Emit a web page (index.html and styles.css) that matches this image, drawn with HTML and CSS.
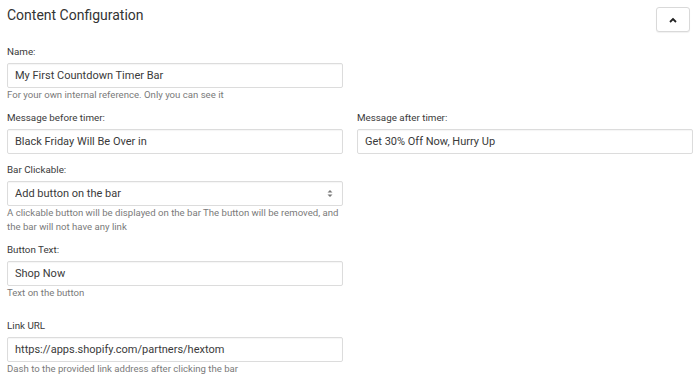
FILE: index.html
```html
<!DOCTYPE html>
<html lang="en">
<head>
    <meta charset="UTF-8">
    <meta name="viewport" content="width=device-width, initial-scale=1.0">
    <title>Content Configuration</title>
    <link rel="stylesheet" href="styles.css">
</head>
<body>

<div class="panel">
    <div class="panel-header">
        <h2>Content Configuration</h2>
        <button class="collapse-btn" type="button" aria-label="Collapse">
            <svg width="8" height="6" viewBox="0 0 8 6"><path d="M1 5 L4 2 L7 5" fill="none" stroke="#222" stroke-width="1.8"/></svg>
        </button>
    </div>

    <div class="row">
        <div class="field">
            <label for="name">Name:</label>
            <input type="text" id="name" value="My First Countdown Timer Bar">
            <div class="help">For your own internal reference. Only you can see it</div>
        </div>
        <div class="field"></div>
    </div>

    <div class="row">
        <div class="field">
            <label for="before">Message before timer:</label>
            <input type="text" id="before" value="Black Friday Will Be Over in">
        </div>
        <div class="field">
            <label for="after">Message after timer:</label>
            <input type="text" id="after" value="Get 30% Off Now, Hurry Up">
        </div>
    </div>

    <div class="row">
        <div class="field">
            <label for="clickable">Bar Clickable:</label>
            <div class="select-wrap">
                <select id="clickable">
                    <option>Add button on the bar</option>
                    <option>Make the whole bar clickable</option>
                    <option>No link</option>
                </select>
                <span class="arrows">
                    <svg width="6" height="9" viewBox="0 0 6 9"><path d="M0.5 3.5 L3 1 L5.5 3.5 Z M0.5 5.5 L3 8 L5.5 5.5 Z" fill="#777"/></svg>
                </span>
            </div>
            <div class="help">A clickable button will be displayed on the bar The button will be removed, and the bar will not have any link</div>
        </div>
        <div class="field"></div>
    </div>

    <div class="row">
        <div class="field">
            <label for="btntext">Button Text:</label>
            <input type="text" id="btntext" value="Shop Now">
            <div class="help">Text on the button</div>
        </div>
        <div class="field"></div>
    </div>

    <div class="row spaced">
        <div class="field">
            <label for="url">Link URL</label>
            <input type="text" id="url" value="https://apps.shopify.com/partners/hextom">
            <div class="help">Dash to the provided link address after clicking the bar</div>
        </div>
        <div class="field"></div>
    </div>
</div>

</body>
</html>
```

FILE: styles.css
```css
body {
    font-family: Roboto, 'Liberation Sans', sans-serif;
    background-color: #fff;
    color: #3a3a3a;
    margin: 0;
}
.panel {
    padding: 0 7px;
}
.panel-header {
    display: flex;
    justify-content: space-between;
    align-items: flex-start;
    height: 45px;
}
.panel-header h2 {
    font-size: 14px;
    font-weight: 400;
    color: #333;
    margin: 0;
    padding-top: 6px;
    line-height: 18px;
}
.collapse-btn {
    width: 34px;
    height: 25px;
    margin-top: 7px;
    margin-right: 3px;
    background-color: #fff;
    border: 1px solid #d9d9d9;
    border-radius: 3px;
    box-shadow: 0 1px 1px rgba(0, 0, 0, 0.06);
    display: flex;
    align-items: center;
    justify-content: center;
    padding: 0;
    cursor: pointer;
}
.row {
    display: grid;
    grid-template-columns: 1fr 1fr;
    column-gap: 14px;
    margin-bottom: 9px;
}
.row.spaced {
    margin-top: 19px;
}
.field label {
    display: block;
    font-size: 9.8px;
    line-height: 14px;
    color: #3a3a3a;
    margin-bottom: 4px;
}
.field input,
.field select {
    display: block;
    width: 100%;
    height: 25px;
    box-sizing: border-box;
    border: 1px solid #dcdcdc;
    border-radius: 2px;
    box-shadow: inset 0 1px 1px rgba(0, 0, 0, 0.04);
    padding: 0 7px;
    font-family: Roboto, 'Liberation Sans', sans-serif;
    font-size: 11px;
    color: #3a3a3a;
    background-color: #fff;
    outline: none;
}
.select-wrap {
    position: relative;
}
.field select {
    appearance: none;
    -webkit-appearance: none;
}
.arrows {
    position: absolute;
    right: 10px;
    top: 8px;
    line-height: 0;
    pointer-events: none;
}
.help {
    font-size: 9.6px;
    line-height: 14px;
    color: #7a7a7a;
}
```
